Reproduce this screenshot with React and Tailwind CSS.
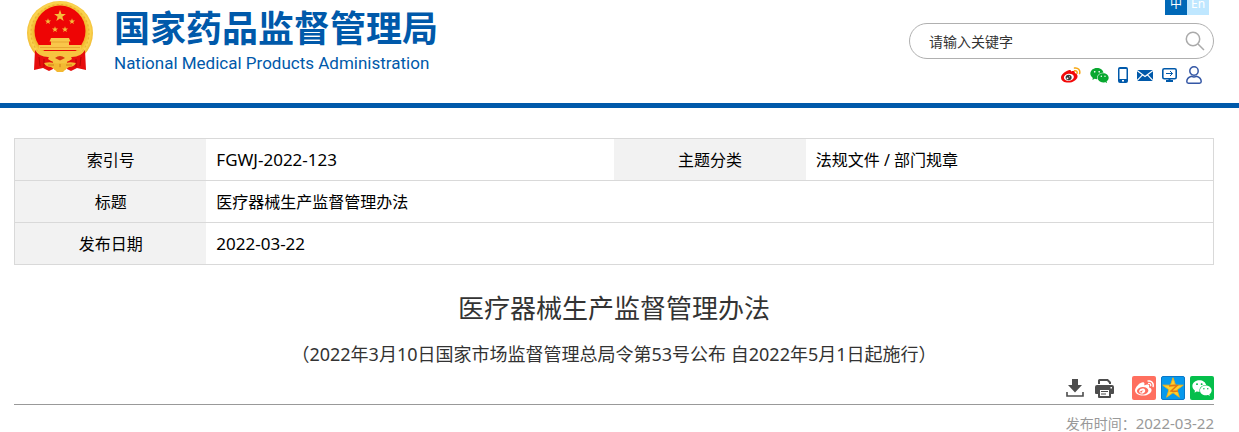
import React from 'react';
import { FaWeibo } from 'react-icons/fa';
import { AiFillWechat } from 'react-icons/ai';

const STAR = 'M0-10 2.4-3.1 9.5-3.1 3.8 1.2 5.9 8.1 0 3.9-5.9 8.1-3.8 1.2-9.5-3.1-2.4-3.1Z';

function Emblem() {
  return (
    <svg viewBox="0 0 66 71" className="h-[71px] w-[66px] shrink-0" aria-hidden="true">
      <defs>
        <radialGradient id="gold" cx="50%" cy="48%" r="52%">
          <stop offset="0.76" stopColor="#f0b92c" />
          <stop offset="0.88" stopColor="#fbd551" />
          <stop offset="1" stopColor="#eeb42b" />
        </radialGradient>
      </defs>
      <ellipse cx="33" cy="32" rx="33" ry="32" fill="url(#gold)" />
      <ellipse cx="33" cy="32" rx="29" ry="28.5" fill="none" stroke="#dc9b22" strokeWidth="1.2" strokeDasharray="2 2.4" opacity=".5" />
      <circle cx="33" cy="30" r="25.5" fill="#ee0505" />
      <g fill="#f4bd3c">
        <path d={STAR} transform="translate(33 15) scale(.62)" />
        <path d={STAR} transform="translate(21 20.500) scale(.32)" />
        <path d={STAR} transform="translate(45 20.500) scale(.32)" />
        <path d={STAR} transform="translate(28 28.500) scale(.32)" />
        <path d={STAR} transform="translate(38 28.500) scale(.32)" />
      </g>
      <path d="M24 37h18l1.500 3.500H42V44h12v5H12v-5h12v-3.500h-1.500Z" fill="#f9c64a" />
      <path d="M24 41h18M13 46.500h40" stroke="#e3a02c" strokeWidth=".8" />
      <path d="M9 50h48l-9 8H18Z" fill="#f7c440" />
      <path d="M8 49q4 7 13 7l5 1v11l-4 2-6-3-9 2Zm50 0q-4 7-13 7l-5 1v11l4 2 6-3 9 2Z" fill="#e60d0d" />
      <path d="m12 56 1 9m4-7v8M54 56l-1 9m-4-7v8" stroke="#b80505" />
      <path d="M23 54q10-5 20 0l2 4q-5 4-12 4t-12-4Z" fill="#f7c440" />
      <path d="M28 57q5-4 10 0l-5 2.500Z" fill="#d93611" />
      <path d="M17 62q8-2 12 1l4-1 4 1q4-3 12-1-2 4-7 4l-4 3h-10l-4-3q-5 0-7-4Z" fill="#f3b932" />
      <path d="M21 64h6m12 0h6M33 63v5" stroke="#cd7f18" />
      <path d="m27 68 6-2 6 2-3 3h-6Z" fill="#f3b932" />
    </svg>
  );
}

function WeiboColor() {
  return (
    <svg viewBox="0 0 20 16" className="h-4 w-5" aria-hidden="true">
      <path d="M7.600 3.200c1-.5 2.500-.6 2.400 1.200 2-.8 4.300-.7 3.800 1.600 5 1.400 3 8-4.800 9.500-5 .6-9-1.600-9-5.100 0-2.700 4-6.200 7.600-7.200Z" fill="#f20808" />
      <ellipse cx="7.900" cy="10.300" rx="5" ry="3.500" fill="#fff" transform="rotate(-8 7.900 10.300)" />
      <ellipse cx="7.600" cy="10.500" rx="3" ry="2.700" fill="#3b3b3b" />
      <circle cx="6.500" cy="11.300" r=".9" fill="#fff" />
      <circle cx="8.500" cy="9.700" r=".5" fill="#fff" />
      <path d="M13.500 1c3.500-.7 6.100 2.100 5.100 5.600M13.500 3.800c1.900-.3 3 .8 2.500 2.500" fill="none" stroke="#f7a711" strokeWidth="1.500" strokeLinecap="round" />
    </svg>
  );
}

function Phone() {
  return (
    <svg viewBox="0 0 10 16" className="h-4 w-[10px]" aria-hidden="true">
      <path fillRule="evenodd" d="M2 0h6q2 0 2 2v12q0 2-2 2H2q-2 0-2-2V2Q0 0 2 0Zm-.5 2v10h7V2ZM4 13v1.500h2V13Z" fill="#0059aa" />
    </svg>
  );
}

function Mail() {
  return (
    <svg viewBox="0 0 16 11" className="h-[11px] w-4" aria-hidden="true">
      <path d="M0 0h16v11H0Z" fill="#0059aa" />
      <path d="m0 .5 8 6 8-6M0 10.500l5.500-5.700M16 10.500l-5.500-5.700" fill="none" stroke="#fff" strokeWidth="1.200" />
    </svg>
  );
}

function Monitor() {
  return (
    <svg viewBox="0 0 15 14" className="h-[14px] w-[15px]" aria-hidden="true">
      <rect x=".8" y=".8" width="13.400" height="9.900" rx="1.500" fill="none" stroke="#0059aa" strokeWidth="1.600" />
      <path d="M4 13h7M7.500 11v2" stroke="#0059aa" strokeWidth="2" />
      <path d="M4 5.500h6.500M8 3l2.500 2.500L8 8" fill="none" stroke="#0059aa" />
    </svg>
  );
}

function Person() {
  return (
    <svg viewBox="0 0 16 18" className="h-[18px] w-4" aria-hidden="true">
      <g fill="none" stroke="#3457a5" strokeWidth="1.500">
        <circle cx="8" cy="5" r="4.200" />
        <path d="M5.500 10.200C2.500 11 .8 13 .8 15.500q0 1.700 1.700 1.700h11q1.700 0 1.700-1.700c0-2.500-1.700-4.500-4.700-5.300-1.500.9-3.500.9-5 0Z" />
      </g>
    </svg>
  );
}

function Download() {
  return (
    <svg viewBox="0 0 18 18" className="h-[18px] w-[18px]" aria-hidden="true">
      <path d="M6 0h6v6h4l-7 7.500L2 6h4Z" fill="#4d4d4d" />
      <path d="M1 13v4h16v-4" fill="none" stroke="#4d4d4d" strokeWidth="1.600" />
    </svg>
  );
}

function Printer() {
  return (
    <svg viewBox="0 0 19 19" className="h-[19px] w-[19px]" aria-hidden="true">
      <path d="M4 5V1.500Q4 1 4.500 1h8L15 3.500V5" fill="none" stroke="#4d4d4d" strokeWidth="2" />
      <path fillRule="evenodd" d="M2 6h15q2 0 2 2v6q0 1-1 1h-2v3q0 1-1 1H4q-1 0-1-1v-3H1q-1 0-1-1V8q0-2 2-2Zm3 5v6h9v-6Zm10.500-3v1.500H17V8Z" fill="#4d4d4d" />
      <path d="M6 12.500h7M6 15h5" stroke="#4d4d4d" />
    </svg>
  );
}

const quickLinks = [
  ['微博', <WeiboColor />],
  ['微信', <AiFillWechat className="h-[21px] w-[21px] -mx-px text-[#07a82f]" />],
  ['手机版', <Phone />],
  ['邮箱', <Mail />],
  ['电脑版', <Monitor />],
  ['个人中心', <Person />],
];

function Latin({ children }) {
  return <span className="text-[17px]">{children}</span>;
}

const th = 'bg-[#f2f2f2] p-0 text-center font-normal';
const td = 'px-[10px] py-0';

export default function App() {
  return (
    <div className="bg-white font-['Noto_Sans','Noto_Sans_CJK_SC',sans-serif] text-black">
      <header className="flex justify-between border-b-[5px] border-[#0059aa] pr-[25px] pl-[27px]">
        <a href="#home" className="flex items-start gap-[21px] pt-px text-[#0059aa]">
          <Emblem />
          <span className="flex flex-col pt-[5px]">
            <span className="font-['Noto_Sans_CJK_SC',sans-serif] text-[36px] leading-[40px] font-bold whitespace-nowrap">国家药品监督管理局</span>
            <span className="mt-1 font-['Roboto',sans-serif] text-[17px] leading-[26px] whitespace-nowrap">National Medical Products Administration</span>
          </span>
        </a>
        <div className="flex w-[305px] flex-col pb-[19px]">
          <div className="flex h-[15px] justify-end overflow-hidden pr-[5px] text-[12px] leading-[8px] text-white">
            <button type="button" className="flex w-[22px] items-start justify-center bg-[#0068b7]">中</button>
            <button type="button" className="flex w-[22px] items-start justify-center bg-[#bfe7ff]">En</button>
          </div>
          <form className="mt-2 flex h-9 items-center rounded-full border border-[#b0b0b0] pr-2 pl-[19px]" onSubmit={(e) => e.preventDefault()}>
            <input type="text" aria-label="请输入关键字" placeholder="请输入关键字" className="min-w-0 flex-1 bg-transparent text-[14px] outline-none placeholder:text-[#333]" />
            <button type="submit" aria-label="搜索">
              <svg viewBox="0 0 20 20" className="h-5 w-5" fill="none" stroke="#aaa" strokeWidth="1.500">
                <circle cx="8" cy="8" r="6.700" />
                <path d="m13 13 6 6" />
              </svg>
            </button>
          </form>
          <nav className="mt-[7px] flex h-[18px] items-center justify-end gap-[9px] pr-3">
            {quickLinks.map(([label, icon]) => (
              <a key={label} href="#link" aria-label={label}>{icon}</a>
            ))}
          </nav>
        </div>
      </header>

      <main className="pt-[30px] pr-[25px] pl-[14px]">
        <table className="w-full table-fixed border-collapse border border-[#d9d9d9] text-[16px] leading-6">
          <colgroup>
            <col className="w-[16%]" />
            <col className="w-[34%]" />
            <col className="w-[16%]" />
            <col className="w-[34%]" />
          </colgroup>
          <tbody>
            <tr className="h-[42px] border-b border-[#d9d9d9]">
              <th scope="row" className={th}>索引号</th>
              <td className={td}><Latin>FGWJ-2022-123</Latin></td>
              <th scope="row" className={th}>主题分类</th>
              <td className={td}>法规文件 / 部门规章</td>
            </tr>
            <tr className="h-[42px] border-b border-[#d9d9d9]">
              <th scope="row" className={th}>标题</th>
              <td className={td} colSpan={3}>医疗器械生产监督管理办法</td>
            </tr>
            <tr className="h-[42px]">
              <th scope="row" className={th}>发布日期</th>
              <td className={td} colSpan={3}><Latin>2022-03-22</Latin></td>
            </tr>
          </tbody>
        </table>

        <h1 className="mt-[23px] text-center text-[26px] leading-10 text-[#333]">医疗器械生产监督管理办法</h1>
        <p className="mt-3 text-center text-[18px] leading-7 text-[#333]">（2022年3月10日国家市场监督管理总局令第53号公布 自2022年5月1日起施行）</p>

        <div className="mt-2 flex items-center justify-end border-b border-[#999] pb-1">
          <button type="button" aria-label="下载" className="mr-[11px]"><Download /></button>
          <button type="button" aria-label="打印" className="mr-[18px]"><Printer /></button>
          <div className="flex gap-[5px]">
            <a href="#weibo" aria-label="分享到微博" className="flex h-6 w-6 items-center justify-center rounded-[2px] bg-[#ff6f5f] text-white"><FaWeibo className="h-[19px] w-[19px]" /></a>
            <a href="#qzone" aria-label="分享到QQ空间" className="flex h-6 w-6 items-center justify-center rounded-[2px] border border-[#0878c9] bg-[#0799ec]">
              <svg viewBox="0 0 22 22" className="h-[22px] w-[22px]" aria-hidden="true">
                <path d={STAR} transform="translate(11 11.500) scale(1.08)" fill="#ffd02e" stroke="#f8b114" strokeWidth=".8" strokeLinejoin="round" />
                <path d="M7 9q4-1 8-.5L9 14q3 .8 7 0" fill="none" stroke="#e57811" strokeWidth="1.600" />
              </svg>
            </a>
            <a href="#wechat" aria-label="分享到微信" className="flex h-6 w-6 items-center justify-center rounded-[2px] bg-[#05bf4b] text-white"><AiFillWechat className="h-[22px] w-[22px]" /></a>
          </div>
        </div>
        <p className="mt-[6px] text-right text-[14px] leading-6 text-[#999]">发布时间：<span className="text-[15px]">2022-03-22</span></p>
      </main>
    </div>
  );
}
